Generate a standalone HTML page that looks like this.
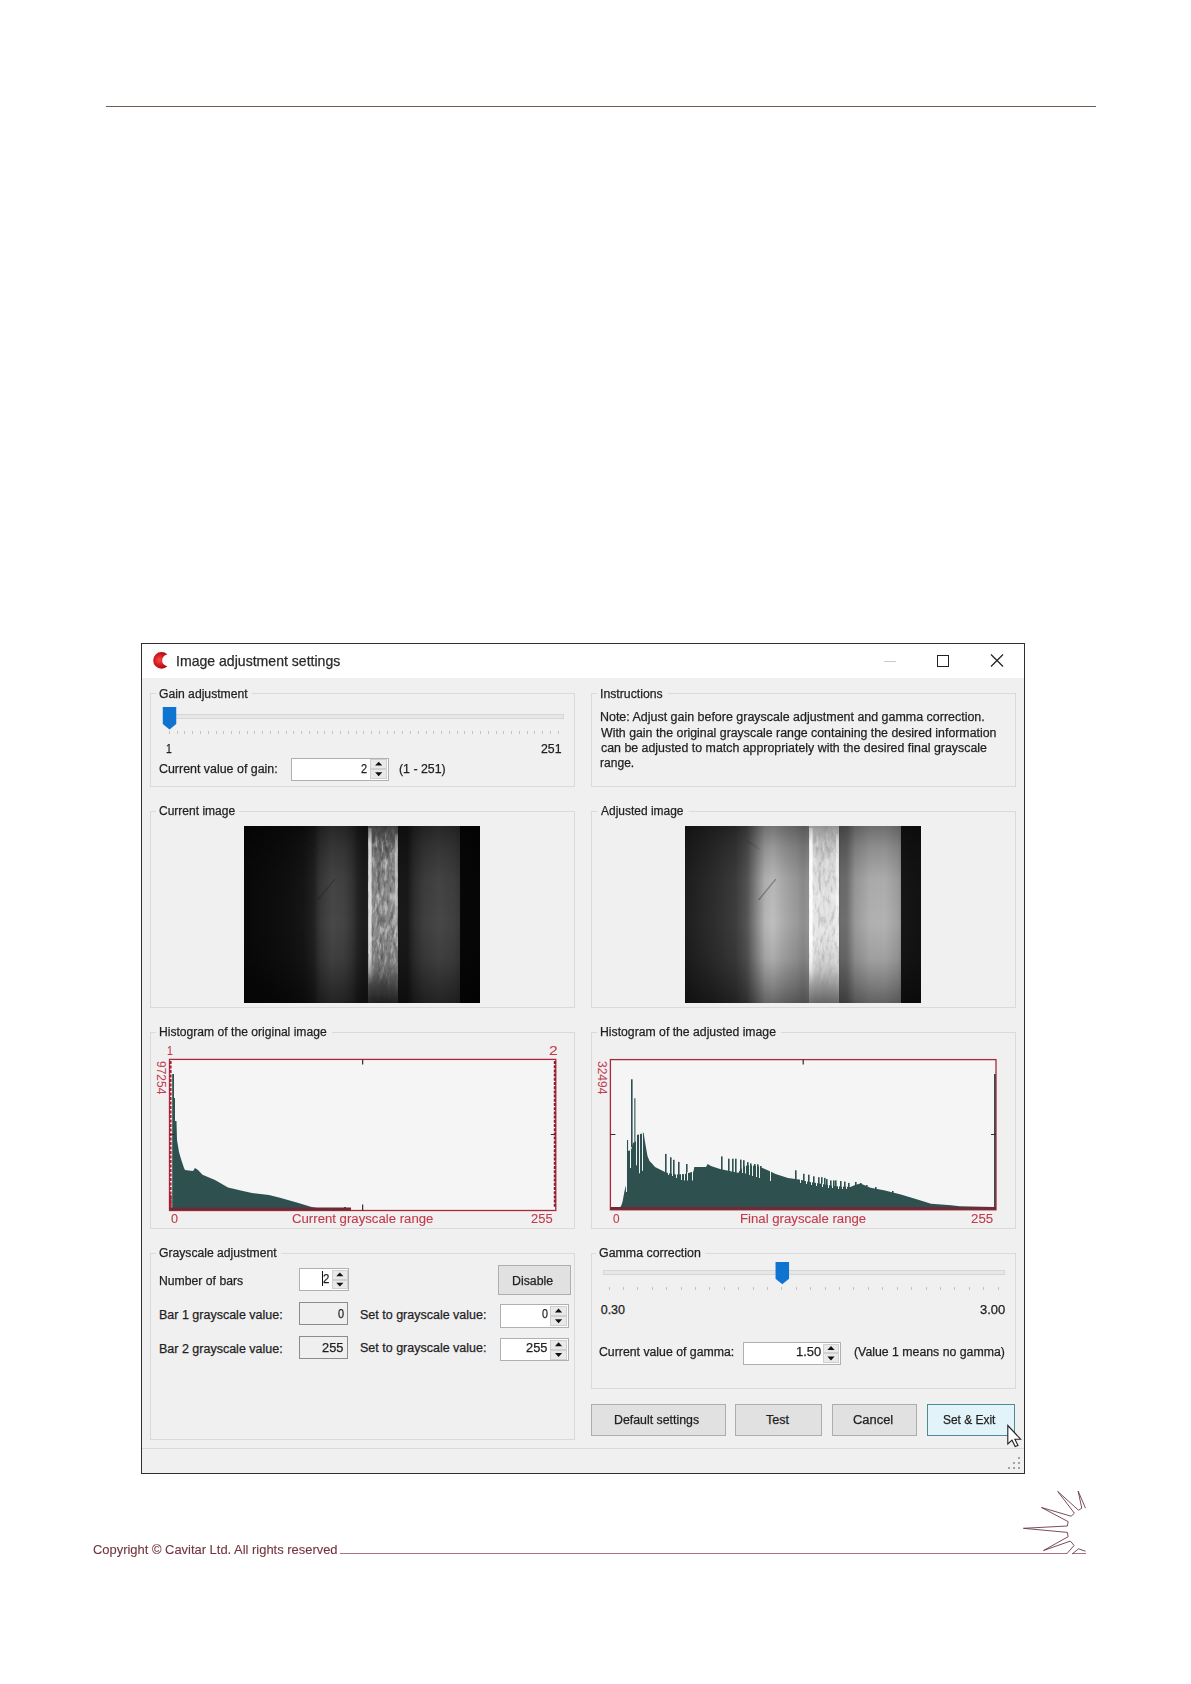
<!DOCTYPE html><html><head><meta charset="utf-8"><style>
html,body{margin:0;padding:0;background:#fff;width:1191px;height:1684px;overflow:hidden;position:relative}
.t{position:absolute;white-space:pre;font-family:"Liberation Sans", sans-serif;line-height:1;-webkit-text-stroke:0.25px currentColor}
svg{position:absolute;left:0;top:0;overflow:visible}
div{box-sizing:border-box}
</style></head><body>
<div style="position:absolute;left:106px;top:106px;width:990px;height:1.3px;background:#735c4f"></div>
<div style="position:absolute;left:141px;top:643px;width:884px;height:831px;background:#f0f0f0;border:1px solid #2f2f2f"></div>
<div style="position:absolute;left:142px;top:644px;width:882px;height:34px;background:#fff"></div>
<svg width="1" height="1"><defs><radialGradient id="ig" gradientUnits="userSpaceOnUse" cx="159.5" cy="660" r="9"><stop offset="0" stop-color="#f2503e"/><stop offset="0.55" stop-color="#d91c22"/><stop offset="1" stop-color="#a80c14"/></radialGradient></defs><path d="M167.4 654.56 A8.3 8.3 0 1 0 167.4 666.24 A5.87 5.87 0 0 1 167.4 654.56 Z" fill="url(#ig)"/></svg>
<div style="position:absolute;left:884px;top:660.5px;width:12px;height:1px;background:#c9c9c9"></div>
<div style="position:absolute;left:937px;top:654.5px;width:12px;height:12px;border:1.2px solid #222"></div>
<svg width="1" height="1"><path d="M991 654.5 L1003 666.5 M1003 654.5 L991 666.5" stroke="#222" stroke-width="1.2"/></svg>
<div style="position:absolute;left:149.6px;top:693px;width:425.9px;height:94px;border:1px solid #dadada;"></div>
<div style="position:absolute;left:155.6px;top:692px;width:96.4px;height:3px;background:#f0f0f0"></div>
<div style="position:absolute;left:590.6px;top:693px;width:425.4px;height:94px;border:1px solid #dadada;"></div>
<div style="position:absolute;left:597px;top:692px;width:71px;height:3px;background:#f0f0f0"></div>
<div style="position:absolute;left:149.6px;top:810.7px;width:425.9px;height:197.8px;border:1px solid #dadada;"></div>
<div style="position:absolute;left:155.6px;top:809.7px;width:83.9px;height:3px;background:#f0f0f0"></div>
<div style="position:absolute;left:590.6px;top:810.7px;width:425.4px;height:197.8px;border:1px solid #dadada;"></div>
<div style="position:absolute;left:597px;top:809.7px;width:91.5px;height:3px;background:#f0f0f0"></div>
<div style="position:absolute;left:149.6px;top:1031.6px;width:425.9px;height:197.9px;border:1px solid #dadada;"></div>
<div style="position:absolute;left:156px;top:1030.6px;width:176px;height:3px;background:#f0f0f0"></div>
<div style="position:absolute;left:590.6px;top:1031.6px;width:425.4px;height:197.9px;border:1px solid #dadada;"></div>
<div style="position:absolute;left:597px;top:1030.6px;width:184px;height:3px;background:#f0f0f0"></div>
<div style="position:absolute;left:149.6px;top:1252.5px;width:425.9px;height:187.5px;border:1px solid #dadada;"></div>
<div style="position:absolute;left:155.6px;top:1251.5px;width:125.9px;height:3px;background:#f0f0f0"></div>
<div style="position:absolute;left:590.6px;top:1252.5px;width:425.4px;height:136.5px;border:1px solid #dadada;"></div>
<div style="position:absolute;left:596px;top:1251.5px;width:109px;height:3px;background:#f0f0f0"></div>
<div style="position:absolute;left:142px;top:1448px;width:882px;height:1px;background:#dadada"></div>
<div style="position:absolute;left:163px;top:713.8px;width:400.5px;height:5.2px;background:#e7e7e7;border:1px solid #d6d6d6"></div>
<svg width="1" height="1"><path d="M162.75 707 L176.25 707 L176.25 724 L169.5 729.5 L162.75 724 Z" fill="#0f74cf"/></svg>
<div style="position:absolute;left:168.85px;top:730.7px;width:0.9px;height:3.5px;background:#c2c2c2"></div>
<div style="position:absolute;left:176.63px;top:730.7px;width:0.9px;height:3.5px;background:#c2c2c2"></div>
<div style="position:absolute;left:184.41px;top:730.7px;width:0.9px;height:3.5px;background:#c2c2c2"></div>
<div style="position:absolute;left:192.18px;top:730.7px;width:0.9px;height:3.5px;background:#c2c2c2"></div>
<div style="position:absolute;left:199.96px;top:730.7px;width:0.9px;height:3.5px;background:#c2c2c2"></div>
<div style="position:absolute;left:207.74px;top:730.7px;width:0.9px;height:3.5px;background:#c2c2c2"></div>
<div style="position:absolute;left:215.52px;top:730.7px;width:0.9px;height:3.5px;background:#c2c2c2"></div>
<div style="position:absolute;left:223.3px;top:730.7px;width:0.9px;height:3.5px;background:#c2c2c2"></div>
<div style="position:absolute;left:231.07px;top:730.7px;width:0.9px;height:3.5px;background:#c2c2c2"></div>
<div style="position:absolute;left:238.85px;top:730.7px;width:0.9px;height:3.5px;background:#c2c2c2"></div>
<div style="position:absolute;left:246.63px;top:730.7px;width:0.9px;height:3.5px;background:#c2c2c2"></div>
<div style="position:absolute;left:254.41px;top:730.7px;width:0.9px;height:3.5px;background:#c2c2c2"></div>
<div style="position:absolute;left:262.19px;top:730.7px;width:0.9px;height:3.5px;background:#c2c2c2"></div>
<div style="position:absolute;left:269.96px;top:730.7px;width:0.9px;height:3.5px;background:#c2c2c2"></div>
<div style="position:absolute;left:277.74px;top:730.7px;width:0.9px;height:3.5px;background:#c2c2c2"></div>
<div style="position:absolute;left:285.52px;top:730.7px;width:0.9px;height:3.5px;background:#c2c2c2"></div>
<div style="position:absolute;left:293.3px;top:730.7px;width:0.9px;height:3.5px;background:#c2c2c2"></div>
<div style="position:absolute;left:301.08px;top:730.7px;width:0.9px;height:3.5px;background:#c2c2c2"></div>
<div style="position:absolute;left:308.85px;top:730.7px;width:0.9px;height:3.5px;background:#c2c2c2"></div>
<div style="position:absolute;left:316.63px;top:730.7px;width:0.9px;height:3.5px;background:#c2c2c2"></div>
<div style="position:absolute;left:324.41px;top:730.7px;width:0.9px;height:3.5px;background:#c2c2c2"></div>
<div style="position:absolute;left:332.19px;top:730.7px;width:0.9px;height:3.5px;background:#c2c2c2"></div>
<div style="position:absolute;left:339.97px;top:730.7px;width:0.9px;height:3.5px;background:#c2c2c2"></div>
<div style="position:absolute;left:347.74px;top:730.7px;width:0.9px;height:3.5px;background:#c2c2c2"></div>
<div style="position:absolute;left:355.52px;top:730.7px;width:0.9px;height:3.5px;background:#c2c2c2"></div>
<div style="position:absolute;left:363.3px;top:730.7px;width:0.9px;height:3.5px;background:#c2c2c2"></div>
<div style="position:absolute;left:371.08px;top:730.7px;width:0.9px;height:3.5px;background:#c2c2c2"></div>
<div style="position:absolute;left:378.86px;top:730.7px;width:0.9px;height:3.5px;background:#c2c2c2"></div>
<div style="position:absolute;left:386.63px;top:730.7px;width:0.9px;height:3.5px;background:#c2c2c2"></div>
<div style="position:absolute;left:394.41px;top:730.7px;width:0.9px;height:3.5px;background:#c2c2c2"></div>
<div style="position:absolute;left:402.19px;top:730.7px;width:0.9px;height:3.5px;background:#c2c2c2"></div>
<div style="position:absolute;left:409.97px;top:730.7px;width:0.9px;height:3.5px;background:#c2c2c2"></div>
<div style="position:absolute;left:417.75px;top:730.7px;width:0.9px;height:3.5px;background:#c2c2c2"></div>
<div style="position:absolute;left:425.52px;top:730.7px;width:0.9px;height:3.5px;background:#c2c2c2"></div>
<div style="position:absolute;left:433.3px;top:730.7px;width:0.9px;height:3.5px;background:#c2c2c2"></div>
<div style="position:absolute;left:441.08px;top:730.7px;width:0.9px;height:3.5px;background:#c2c2c2"></div>
<div style="position:absolute;left:448.86px;top:730.7px;width:0.9px;height:3.5px;background:#c2c2c2"></div>
<div style="position:absolute;left:456.64px;top:730.7px;width:0.9px;height:3.5px;background:#c2c2c2"></div>
<div style="position:absolute;left:464.41px;top:730.7px;width:0.9px;height:3.5px;background:#c2c2c2"></div>
<div style="position:absolute;left:472.19px;top:730.7px;width:0.9px;height:3.5px;background:#c2c2c2"></div>
<div style="position:absolute;left:479.97px;top:730.7px;width:0.9px;height:3.5px;background:#c2c2c2"></div>
<div style="position:absolute;left:487.75px;top:730.7px;width:0.9px;height:3.5px;background:#c2c2c2"></div>
<div style="position:absolute;left:495.53px;top:730.7px;width:0.9px;height:3.5px;background:#c2c2c2"></div>
<div style="position:absolute;left:503.3px;top:730.7px;width:0.9px;height:3.5px;background:#c2c2c2"></div>
<div style="position:absolute;left:511.08px;top:730.7px;width:0.9px;height:3.5px;background:#c2c2c2"></div>
<div style="position:absolute;left:518.86px;top:730.7px;width:0.9px;height:3.5px;background:#c2c2c2"></div>
<div style="position:absolute;left:526.64px;top:730.7px;width:0.9px;height:3.5px;background:#c2c2c2"></div>
<div style="position:absolute;left:534.42px;top:730.7px;width:0.9px;height:3.5px;background:#c2c2c2"></div>
<div style="position:absolute;left:542.19px;top:730.7px;width:0.9px;height:3.5px;background:#c2c2c2"></div>
<div style="position:absolute;left:549.97px;top:730.7px;width:0.9px;height:3.5px;background:#c2c2c2"></div>
<div style="position:absolute;left:557.75px;top:730.7px;width:0.9px;height:3.5px;background:#c2c2c2"></div>
<div style="position:absolute;left:602.5px;top:1269.5px;width:402px;height:5px;background:#e7e7e7;border:1px solid #d6d6d6"></div>
<svg width="1" height="1"><path d="M775.55 1262 L789.05 1262 L789.05 1278.8 L782.3 1284.3 L775.55 1278.8 Z" fill="#0f74cf"/></svg>
<div style="position:absolute;left:608.55px;top:1286.5px;width:0.9px;height:3.5px;background:#c2c2c2"></div>
<div style="position:absolute;left:622.96px;top:1286.5px;width:0.9px;height:3.5px;background:#c2c2c2"></div>
<div style="position:absolute;left:637.36px;top:1286.5px;width:0.9px;height:3.5px;background:#c2c2c2"></div>
<div style="position:absolute;left:651.77px;top:1286.5px;width:0.9px;height:3.5px;background:#c2c2c2"></div>
<div style="position:absolute;left:666.18px;top:1286.5px;width:0.9px;height:3.5px;background:#c2c2c2"></div>
<div style="position:absolute;left:680.58px;top:1286.5px;width:0.9px;height:3.5px;background:#c2c2c2"></div>
<div style="position:absolute;left:694.99px;top:1286.5px;width:0.9px;height:3.5px;background:#c2c2c2"></div>
<div style="position:absolute;left:709.4px;top:1286.5px;width:0.9px;height:3.5px;background:#c2c2c2"></div>
<div style="position:absolute;left:723.81px;top:1286.5px;width:0.9px;height:3.5px;background:#c2c2c2"></div>
<div style="position:absolute;left:738.21px;top:1286.5px;width:0.9px;height:3.5px;background:#c2c2c2"></div>
<div style="position:absolute;left:752.62px;top:1286.5px;width:0.9px;height:3.5px;background:#c2c2c2"></div>
<div style="position:absolute;left:767.03px;top:1286.5px;width:0.9px;height:3.5px;background:#c2c2c2"></div>
<div style="position:absolute;left:781.43px;top:1286.5px;width:0.9px;height:3.5px;background:#c2c2c2"></div>
<div style="position:absolute;left:795.84px;top:1286.5px;width:0.9px;height:3.5px;background:#c2c2c2"></div>
<div style="position:absolute;left:810.25px;top:1286.5px;width:0.9px;height:3.5px;background:#c2c2c2"></div>
<div style="position:absolute;left:824.65px;top:1286.5px;width:0.9px;height:3.5px;background:#c2c2c2"></div>
<div style="position:absolute;left:839.06px;top:1286.5px;width:0.9px;height:3.5px;background:#c2c2c2"></div>
<div style="position:absolute;left:853.47px;top:1286.5px;width:0.9px;height:3.5px;background:#c2c2c2"></div>
<div style="position:absolute;left:867.88px;top:1286.5px;width:0.9px;height:3.5px;background:#c2c2c2"></div>
<div style="position:absolute;left:882.28px;top:1286.5px;width:0.9px;height:3.5px;background:#c2c2c2"></div>
<div style="position:absolute;left:896.69px;top:1286.5px;width:0.9px;height:3.5px;background:#c2c2c2"></div>
<div style="position:absolute;left:911.1px;top:1286.5px;width:0.9px;height:3.5px;background:#c2c2c2"></div>
<div style="position:absolute;left:925.5px;top:1286.5px;width:0.9px;height:3.5px;background:#c2c2c2"></div>
<div style="position:absolute;left:939.91px;top:1286.5px;width:0.9px;height:3.5px;background:#c2c2c2"></div>
<div style="position:absolute;left:954.32px;top:1286.5px;width:0.9px;height:3.5px;background:#c2c2c2"></div>
<div style="position:absolute;left:968.72px;top:1286.5px;width:0.9px;height:3.5px;background:#c2c2c2"></div>
<div style="position:absolute;left:983.13px;top:1286.5px;width:0.9px;height:3.5px;background:#c2c2c2"></div>
<div style="position:absolute;left:997.54px;top:1286.5px;width:0.9px;height:3.5px;background:#c2c2c2"></div>
<div style="position:absolute;left:291px;top:757.5px;width:97.5px;height:23.2px;background:#fff;border:1px solid #b0b0b0"></div>
<div style="position:absolute;left:370.4px;top:759px;width:16.6px;height:10.1px;background:#e9e9e9;border:1px solid #d0d0d0"></div>
<div style="position:absolute;left:370.4px;top:769.1px;width:16.6px;height:10.1px;background:#e9e9e9;border:1px solid #d0d0d0"></div>
<svg width="1" height="1"><path d="M375.1 765.6 L382.3 765.6 L378.7 761.7 Z" fill="#111"/><path d="M375.1 772.35 L382.3 772.35 L378.7 776.25 Z" fill="#111"/></svg>
<div style="position:absolute;left:299.3px;top:1268.4px;width:50.2px;height:22.4px;background:#fff;border:1px solid #b0b0b0"></div>
<div style="position:absolute;left:331.7px;top:1269.9px;width:16.3px;height:9.7px;background:#e9e9e9;border:1px solid #d0d0d0"></div>
<div style="position:absolute;left:331.7px;top:1279.6px;width:16.3px;height:9.7px;background:#e9e9e9;border:1px solid #d0d0d0"></div>
<svg width="1" height="1"><path d="M336.25 1276.3 L343.45 1276.3 L339.85 1272.4 Z" fill="#111"/><path d="M336.25 1282.65 L343.45 1282.65 L339.85 1286.55 Z" fill="#111"/></svg>
<div style="position:absolute;left:299.3px;top:1302.4px;width:48.4px;height:22.7px;background:#efefef;border:1px solid #8c8c8c"></div>
<div style="position:absolute;left:299.3px;top:1336.4px;width:48.4px;height:22.7px;background:#efefef;border:1px solid #8c8c8c"></div>
<div style="position:absolute;left:500px;top:1304.4px;width:68.6px;height:23.2px;background:#fff;border:1px solid #b0b0b0"></div>
<div style="position:absolute;left:550px;top:1305.9px;width:17.1px;height:10.1px;background:#e9e9e9;border:1px solid #d0d0d0"></div>
<div style="position:absolute;left:550px;top:1316px;width:17.1px;height:10.1px;background:#e9e9e9;border:1px solid #d0d0d0"></div>
<svg width="1" height="1"><path d="M554.95 1312.5 L562.15 1312.5 L558.55 1308.6 Z" fill="#111"/><path d="M554.95 1319.25 L562.15 1319.25 L558.55 1323.15 Z" fill="#111"/></svg>
<div style="position:absolute;left:500px;top:1338px;width:68.6px;height:23.4px;background:#fff;border:1px solid #b0b0b0"></div>
<div style="position:absolute;left:550px;top:1339.5px;width:17.1px;height:10.2px;background:#e9e9e9;border:1px solid #d0d0d0"></div>
<div style="position:absolute;left:550px;top:1349.7px;width:17.1px;height:10.2px;background:#e9e9e9;border:1px solid #d0d0d0"></div>
<svg width="1" height="1"><path d="M554.95 1346.15 L562.15 1346.15 L558.55 1342.25 Z" fill="#111"/><path d="M554.95 1353 L562.15 1353 L558.55 1356.9 Z" fill="#111"/></svg>
<div style="position:absolute;left:743.3px;top:1342px;width:97.5px;height:22.7px;background:#fff;border:1px solid #b0b0b0"></div>
<div style="position:absolute;left:822.7px;top:1343.5px;width:16.6px;height:9.85px;background:#e9e9e9;border:1px solid #d0d0d0"></div>
<div style="position:absolute;left:822.7px;top:1353.35px;width:16.6px;height:9.85px;background:#e9e9e9;border:1px solid #d0d0d0"></div>
<svg width="1" height="1"><path d="M827.4 1349.97 L834.6 1349.97 L831 1346.07 Z" fill="#111"/><path d="M827.4 1356.48 L834.6 1356.48 L831 1360.38 Z" fill="#111"/></svg>
<div style="position:absolute;left:322.3px;top:1270.5px;width:1.1px;height:15.5px;background:#111"></div>
<div style="position:absolute;left:498.1px;top:1265px;width:72.9px;height:30.3px;background:#e1e1e1;border:1px solid #adadad"></div>
<div style="position:absolute;left:591.4px;top:1404.2px;width:134.2px;height:31.8px;background:#e1e1e1;border:1px solid #adadad"></div>
<div style="position:absolute;left:735px;top:1404.2px;width:87.4px;height:31.8px;background:#e1e1e1;border:1px solid #adadad"></div>
<div style="position:absolute;left:832px;top:1404.2px;width:85px;height:31.8px;background:#e1e1e1;border:1px solid #adadad"></div>
<div style="position:absolute;left:926.8px;top:1403.9px;width:88.6px;height:32.3px;background:#e3f3fa;border:1.6px solid #4d8c94"></div>
<svg style="left:244px;top:825.5px" width="236" height="177" viewBox="0 0 236 177"><defs><linearGradient id="i1h" gradientUnits="userSpaceOnUse" x1="0" y1="0" x2="236" y2="0"><stop offset="0.0000" stop-color="#080808"/><stop offset="0.0847" stop-color="#0b0b0b"/><stop offset="0.1907" stop-color="#101010"/><stop offset="0.2542" stop-color="#161616"/><stop offset="0.2966" stop-color="#222"/><stop offset="0.3220" stop-color="#383838"/><stop offset="0.3729" stop-color="#484848"/><stop offset="0.4237" stop-color="#434343"/><stop offset="0.4576" stop-color="#363636"/><stop offset="0.4831" stop-color="#242424"/><stop offset="0.5085" stop-color="#1c1c1c"/><stop offset="0.5246" stop-color="#1e1e1e"/><stop offset="0.5263" stop-color="#a8a8a8"/><stop offset="0.5424" stop-color="#949494"/><stop offset="0.5932" stop-color="#8a8a8a"/><stop offset="0.6356" stop-color="#969696"/><stop offset="0.6508" stop-color="#9a9a9a"/><stop offset="0.6534" stop-color="#1a1a1a"/><stop offset="0.6907" stop-color="#181818"/><stop offset="0.7203" stop-color="#2e2e2e"/><stop offset="0.7627" stop-color="#3e3e3e"/><stop offset="0.8263" stop-color="#474747"/><stop offset="0.8898" stop-color="#404040"/><stop offset="0.9136" stop-color="#383838"/><stop offset="0.9161" stop-color="#070707"/><stop offset="1.0000" stop-color="#050505"/></linearGradient><linearGradient id="i1v" x1="0" y1="0" x2="0" y2="1"><stop offset="0" stop-color="#000" stop-opacity="0.45"/><stop offset="0.12" stop-color="#000" stop-opacity="0.25"/><stop offset="0.3" stop-color="#000" stop-opacity="0.06"/><stop offset="0.55" stop-color="#000" stop-opacity="0"/><stop offset="0.75" stop-color="#000" stop-opacity="0.12"/><stop offset="0.9" stop-color="#000" stop-opacity="0.35"/><stop offset="1" stop-color="#000" stop-opacity="0.5"/></linearGradient><linearGradient id="i1sv" x1="0" y1="0" x2="0" y2="1"><stop offset="0" stop-color="#000" stop-opacity="0.6"/><stop offset="0.08" stop-color="#000" stop-opacity="0.4"/><stop offset="0.2" stop-color="#000" stop-opacity="0.15"/><stop offset="0.4" stop-color="#000" stop-opacity="0.04"/><stop offset="0.65" stop-color="#000" stop-opacity="0.05"/><stop offset="0.8" stop-color="#000" stop-opacity="0.22"/><stop offset="0.88" stop-color="#000" stop-opacity="0.5"/><stop offset="1" stop-color="#000" stop-opacity="0.78"/></linearGradient><filter id="i1nz" x="0" y="0" width="100%" height="100%" color-interpolation-filters="sRGB"><feTurbulence type="fractalNoise" baseFrequency="0.32 0.09" numOctaves="3" seed="11"/><feColorMatrix type="matrix" values="0 0 0 0 1  0 0 0 0 1  0 0 0 0 1  2.0 0 0 0 -0.9"/></filter><filter id="i1nzd" x="0" y="0" width="100%" height="100%" color-interpolation-filters="sRGB"><feTurbulence type="fractalNoise" baseFrequency="0.3 0.1" numOctaves="3" seed="5"/><feColorMatrix type="matrix" values="0 0 0 0 0  0 0 0 0 0  0 0 0 0 0  2.0 0 0 0 -0.95"/></filter><linearGradient id="i1mg" x1="0" y1="0" x2="0" y2="1"><stop offset="0" stop-color="#fff" stop-opacity="0.1"/><stop offset="0.12" stop-color="#fff" stop-opacity="1"/><stop offset="0.72" stop-color="#fff" stop-opacity="1"/><stop offset="0.9" stop-color="#fff" stop-opacity="0.1"/><stop offset="1" stop-color="#fff" stop-opacity="0"/></linearGradient><mask id="i1mk" maskUnits="userSpaceOnUse" x="0" y="0" width="236" height="177"><rect x="124" y="0" width="30" height="177" fill="url(#i1mg)"/></mask></defs><rect width="236" height="177" fill="url(#i1h)"/><rect width="124" height="177" fill="url(#i1v)"/><rect x="154" width="82" height="177" fill="url(#i1v)"/><rect x="124" width="30" height="177" fill="url(#i1sv)"/><g mask="url(#i1mk)"><rect x="124" y="0" width="30" height="177" filter="url(#i1nz)" opacity="0.65"/><rect x="124" y="0" width="30" height="177" filter="url(#i1nzd)" opacity="0.45"/></g><linearGradient id="i1eg" x1="0" y1="0" x2="0" y2="1"><stop offset="0" stop-color="#e4e4e4" stop-opacity="0.3"/><stop offset="0.1" stop-color="#e4e4e4" stop-opacity="0.9"/><stop offset="0.6" stop-color="#e4e4e4" stop-opacity="0.9"/><stop offset="0.8" stop-color="#e4e4e4" stop-opacity="0.54"/><stop offset="0.92" stop-color="#e4e4e4" stop-opacity="0"/></linearGradient><rect x="124.4" y="2" width="3.2" height="170" fill="url(#i1eg)"/><rect x="150.8" y="8" width="2.6" height="100" fill="url(#i1eg)" opacity="0.6"/><path d="M90.5 53.5 L74 73.5" stroke="#000" stroke-width="1.3" opacity="0.18" stroke-linecap="round"/><path d="M63 15.5 L74 23" stroke="#000" stroke-width="1.6" opacity="0.063" stroke-linecap="round"/></svg>
<svg style="left:685px;top:825.5px" width="236" height="177" viewBox="0 0 236 177"><defs><linearGradient id="i2h" gradientUnits="userSpaceOnUse" x1="0" y1="0" x2="236" y2="0"><stop offset="0.0000" stop-color="#1a1a1a"/><stop offset="0.0064" stop-color="#1e1e1e"/><stop offset="0.1271" stop-color="#2e2e2e"/><stop offset="0.2119" stop-color="#3c3c3c"/><stop offset="0.2627" stop-color="#555"/><stop offset="0.3051" stop-color="#8a8a8a"/><stop offset="0.3390" stop-color="#b4b4b4"/><stop offset="0.3729" stop-color="#bebebe"/><stop offset="0.4068" stop-color="#b0b0b0"/><stop offset="0.4407" stop-color="#a4a4a4"/><stop offset="0.4746" stop-color="#9a9a9a"/><stop offset="0.5000" stop-color="#8e8e8e"/><stop offset="0.5246" stop-color="#959595"/><stop offset="0.5263" stop-color="#f4f4f4"/><stop offset="0.5508" stop-color="#e6e6e6"/><stop offset="0.5932" stop-color="#dedede"/><stop offset="0.6356" stop-color="#e4e4e4"/><stop offset="0.6508" stop-color="#eaeaea"/><stop offset="0.6534" stop-color="#6a6a6a"/><stop offset="0.6864" stop-color="#707070"/><stop offset="0.7203" stop-color="#999"/><stop offset="0.7839" stop-color="#b0b0b0"/><stop offset="0.8475" stop-color="#b2b2b2"/><stop offset="0.9025" stop-color="#a0a0a0"/><stop offset="0.9136" stop-color="#959595"/><stop offset="0.9161" stop-color="#161616"/><stop offset="1.0000" stop-color="#121212"/></linearGradient><linearGradient id="i2v" x1="0" y1="0" x2="0" y2="1"><stop offset="0" stop-color="#000" stop-opacity="0.38"/><stop offset="0.12" stop-color="#000" stop-opacity="0.2"/><stop offset="0.3" stop-color="#000" stop-opacity="0.04"/><stop offset="0.55" stop-color="#000" stop-opacity="0"/><stop offset="0.75" stop-color="#000" stop-opacity="0.1"/><stop offset="0.9" stop-color="#000" stop-opacity="0.3"/><stop offset="1" stop-color="#000" stop-opacity="0.45"/></linearGradient><linearGradient id="i2sv" x1="0" y1="0" x2="0" y2="1"><stop offset="0" stop-color="#000" stop-opacity="0.35"/><stop offset="0.08" stop-color="#000" stop-opacity="0.2"/><stop offset="0.2" stop-color="#000" stop-opacity="0.06"/><stop offset="0.4" stop-color="#000" stop-opacity="0.0"/><stop offset="0.65" stop-color="#000" stop-opacity="0.0"/><stop offset="0.8" stop-color="#000" stop-opacity="0.12"/><stop offset="0.88" stop-color="#000" stop-opacity="0.3"/><stop offset="1" stop-color="#000" stop-opacity="0.55"/></linearGradient><filter id="i2nz" x="0" y="0" width="100%" height="100%" color-interpolation-filters="sRGB"><feTurbulence type="fractalNoise" baseFrequency="0.32 0.09" numOctaves="3" seed="11"/><feColorMatrix type="matrix" values="0 0 0 0 1  0 0 0 0 1  0 0 0 0 1  2.0 0 0 0 -0.9"/></filter><filter id="i2nzd" x="0" y="0" width="100%" height="100%" color-interpolation-filters="sRGB"><feTurbulence type="fractalNoise" baseFrequency="0.3 0.1" numOctaves="3" seed="5"/><feColorMatrix type="matrix" values="0 0 0 0 0  0 0 0 0 0  0 0 0 0 0  2.0 0 0 0 -0.95"/></filter><linearGradient id="i2mg" x1="0" y1="0" x2="0" y2="1"><stop offset="0" stop-color="#fff" stop-opacity="0.1"/><stop offset="0.12" stop-color="#fff" stop-opacity="1"/><stop offset="0.72" stop-color="#fff" stop-opacity="1"/><stop offset="0.9" stop-color="#fff" stop-opacity="0.1"/><stop offset="1" stop-color="#fff" stop-opacity="0"/></linearGradient><mask id="i2mk" maskUnits="userSpaceOnUse" x="0" y="0" width="236" height="177"><rect x="124" y="0" width="30" height="177" fill="url(#i2mg)"/></mask></defs><rect width="236" height="177" fill="url(#i2h)"/><rect width="124" height="177" fill="url(#i2v)"/><rect x="154" width="82" height="177" fill="url(#i2v)"/><rect x="124" width="30" height="177" fill="url(#i2sv)"/><g mask="url(#i2mk)"><rect x="124" y="0" width="30" height="177" filter="url(#i2nz)" opacity="0.5"/><rect x="124" y="0" width="30" height="177" filter="url(#i2nzd)" opacity="0.22"/></g><linearGradient id="i2eg" x1="0" y1="0" x2="0" y2="1"><stop offset="0" stop-color="#ffffff" stop-opacity="0.3"/><stop offset="0.1" stop-color="#ffffff" stop-opacity="0.9"/><stop offset="0.6" stop-color="#ffffff" stop-opacity="0.9"/><stop offset="0.8" stop-color="#ffffff" stop-opacity="0.54"/><stop offset="0.92" stop-color="#ffffff" stop-opacity="0"/></linearGradient><rect x="124.4" y="2" width="3.2" height="170" fill="url(#i2eg)"/><rect x="150.8" y="8" width="2.6" height="100" fill="url(#i2eg)" opacity="0.6"/><path d="M90.5 53.5 L74 73.5" stroke="#000" stroke-width="1.3" opacity="0.28" stroke-linecap="round"/><path d="M63 15.5 L74 23" stroke="#000" stroke-width="1.6" opacity="0.098" stroke-linecap="round"/></svg>
<svg width="1" height="1"><rect x="169.5" y="1059.4" width="386.29999999999995" height="151.0999999999999" fill="#f5f5f5"/><path d="M170.5 1210.5 L172.2 1210.5 L172.2 1074 L174 1074 L174 1098 L175 1098 L175 1121 L176.5 1121 L177 1140 L179 1152 L181 1159 L182 1162 L184 1168 L185 1170 L193 1171 L195 1168 L198 1170 L202.5 1174.7 L215 1180 L228 1187.6 L243 1191 L252 1193 L269 1195 L280 1197.8 L298.5 1203 L311.5 1207 L317 1208 L344 1208 L344 1207 L346 1207 L346 1208 L351 1208 L351 1210.5 Z" fill="#2e5150"/><rect x="169.5" y="1059.4" width="386.29999999999995" height="151.0999999999999" fill="none" stroke="#a82a3c" stroke-width="1.3"/><rect x="169.5" y="1207.5" width="181.5" height="3" fill="#6e2a36"/><path d="M362.65 1059.4 V1064.4 M362.65 1210.5 V1204.5 M169.5 1134.5 H174.5 M555.8 1134.5 H550.8" stroke="#3a2a2e" stroke-width="1.2"/><path d="M170.6 1061 V1206" stroke="#a81e32" stroke-width="2" stroke-dasharray="3 1.5"/><path d="M170.3 1195 V1208" stroke="#a81e32" stroke-width="2.5"/><path d="M554.8 1061 V1208" stroke="#8a1a2c" stroke-width="2" stroke-dasharray="3 1.2"/></svg>
<svg width="1" height="1"><rect x="610.4" y="1059.6" width="385.6" height="150.20000000000005" fill="#f5f5f5"/><path d="M620.1 1209.8 L620.1 1207.5 L621.5 1205 L622.6 1201.5 L624.3 1192.3 L625.6 1186.4 L626.2 1186 L626.2 1140 L628.1 1140 L628.1 1151 L631 1150 L633 1143 L636 1141 L637 1135 L643.7 1133 L644.7 1140 L646.3 1149.3 L647.5 1156 L649.5 1161 L652 1163.6 L655 1167 L660 1169.5 L665 1172 L670 1173.5 L676 1174.5 L685 1174 L693.5 1171.5 L694.3 1167 L706 1167 L707.6 1164 L711 1166 L720 1169 L737.8 1172.8 L743 1167 L748 1165 L760 1166.5 L762 1167.8 L770.5 1171.6 L775.6 1174 L788 1177.9 L800.7 1179.7 L807 1181.6 L819.6 1183.5 L833.6 1186 L850.4 1186.9 L855 1185 L860.5 1183.5 L870.5 1187.7 L884 1190.2 L900.8 1194.4 L917.5 1199.5 L931 1203.7 L951.1 1205.3 L959.5 1206.2 L994 1207 L994 1074 L996 1074 L996 1209.8 Z" fill="#2e5150"/><rect x="631" y="1079.3" width="1.6" height="67.7" fill="#2e5150"/><rect x="634" y="1098.2" width="1.6" height="43.9" fill="#6d8886"/><rect x="642" y="1132.8" width="1.6" height="1.06" fill="#2e5150"/><rect x="665" y="1153.9" width="1.6" height="18.75" fill="#2e5150"/><rect x="670" y="1157.3" width="1.6" height="16.87" fill="#2e5150"/><rect x="673" y="1159.8" width="1.6" height="14.87" fill="#2e5150"/><rect x="678" y="1161.9" width="1.6" height="12.93" fill="#2e5150"/><rect x="686" y="1164" width="1.6" height="10.06" fill="#2e5150"/><rect x="721" y="1156.4" width="1.6" height="13.53" fill="#2e5150"/><rect x="728" y="1158.7" width="1.6" height="12.57" fill="#2e5150"/><rect x="732" y="1158.7" width="1.6" height="13.47" fill="#2e5150"/><rect x="735" y="1158.7" width="1.6" height="14.11" fill="#2e5150"/><rect x="740" y="1159.6" width="1.6" height="10.91" fill="#2e5150"/><rect x="743" y="1160.2" width="1.6" height="7.1" fill="#2e5150"/><rect x="747" y="1162.1" width="1.6" height="3.56" fill="#2e5150"/><rect x="750" y="1163.4" width="1.6" height="2.47" fill="#2e5150"/><rect x="754" y="1164" width="1.6" height="2.3" fill="#2e5150"/><rect x="757" y="1164.3" width="1.6" height="2.48" fill="#2e5150"/><rect x="760" y="1166" width="1.6" height="1.65" fill="#2e5150"/><rect x="795" y="1170.3" width="1.6" height="9.19" fill="#2e5150"/><rect x="803" y="1173.8" width="1.6" height="7.18" fill="#2e5150"/><rect x="808" y="1174.7" width="1.6" height="7.7" fill="#2e5150"/><rect x="813" y="1176.3" width="1.6" height="6.86" fill="#2e5150"/><rect x="818" y="1177.2" width="1.6" height="6.62" fill="#2e5150"/><rect x="821" y="1177.2" width="1.6" height="7.14" fill="#2e5150"/><rect x="824" y="1177.9" width="1.6" height="7.01" fill="#2e5150"/><rect x="826" y="1179.1" width="1.6" height="6.26" fill="#2e5150"/><rect x="830" y="1180.4" width="1.6" height="5.53" fill="#2e5150"/><rect x="833" y="1180.4" width="1.6" height="6.12" fill="#2e5150"/><rect x="835" y="1180.4" width="1.6" height="6.23" fill="#2e5150"/><rect x="840" y="1181" width="1.6" height="5.86" fill="#2e5150"/><rect x="844" y="1181.6" width="1.6" height="5.5" fill="#2e5150"/><rect x="848" y="1182.9" width="1.6" height="4.4" fill="#2e5150"/><rect x="855" y="1182" width="1.6" height="3.23" fill="#2e5150"/><rect x="860" y="1183" width="1.6" height="1.21" fill="#2e5150"/><rect x="866" y="1185" width="1.6" height="1.73" fill="#2e5150"/><rect x="875" y="1187" width="1.6" height="2.22" fill="#2e5150"/><rect x="892" y="1191" width="1.6" height="1.95" fill="#2e5150"/><rect x="636" y="1134.26" width="1" height="31.04" fill="#eef2f2"/><rect x="639" y="1133.28" width="1" height="40.02" fill="#eef2f2"/><rect x="642" y="1132.5" width="1" height="38.3" fill="#eef2f2"/><rect x="630" y="1146" width="1" height="22" fill="#eef2f2"/><rect x="626" y="1139.5" width="1" height="52.5" fill="#eef2f2"/><rect x="668" y="1171.95" width="1" height="3.05" fill="#eef2f2"/><rect x="672" y="1173.17" width="1" height="2.83" fill="#eef2f2"/><rect x="676" y="1173.83" width="1" height="4.17" fill="#eef2f2"/><rect x="681" y="1173.61" width="1" height="6.39" fill="#eef2f2"/><rect x="684" y="1173.21" width="1" height="7.29" fill="#eef2f2"/><rect x="687" y="1172.24" width="1" height="8.26" fill="#eef2f2"/><rect x="692" y="1171" width="1" height="9.5" fill="#eef2f2"/><rect x="725" y="1169.35" width="1" height="0.65" fill="#eef2f2"/><rect x="730" y="1170.42" width="1" height="0.58" fill="#eef2f2"/><rect x="734" y="1171.17" width="1" height="0.83" fill="#eef2f2"/><rect x="738" y="1169.85" width="1" height="2.65" fill="#eef2f2"/><rect x="742" y="1166.3" width="1" height="6.7" fill="#eef2f2"/><rect x="745" y="1164.9" width="1" height="8.6" fill="#eef2f2"/><rect x="749" y="1164.51" width="1" height="10.49" fill="#eef2f2"/><rect x="752" y="1164.89" width="1" height="11.11" fill="#eef2f2"/><rect x="756" y="1165.38" width="1" height="11.62" fill="#eef2f2"/><rect x="759" y="1165.79" width="1" height="12.21" fill="#eef2f2"/><rect x="770" y="1170.43" width="1" height="10.57" fill="#eef2f2"/><rect x="800" y="1178.89" width="1" height="4.11" fill="#eef2f2"/><rect x="806" y="1180.35" width="1" height="3.65" fill="#eef2f2"/><rect x="811" y="1181.55" width="1" height="3.45" fill="#eef2f2"/><rect x="816" y="1182.23" width="1" height="3.77" fill="#eef2f2"/><rect x="822" y="1183.34" width="1" height="3.66" fill="#eef2f2"/><rect x="828" y="1184.41" width="1" height="3.59" fill="#eef2f2"/><rect x="832" y="1184.95" width="1" height="3.05" fill="#eef2f2"/><rect x="838" y="1185.66" width="1" height="3.34" fill="#eef2f2"/><rect x="842" y="1185.9" width="1" height="3.1" fill="#eef2f2"/><rect x="846" y="1186.12" width="1" height="2.88" fill="#eef2f2"/><rect x="610.4" y="1059.6" width="385.6" height="150.20000000000005" fill="none" stroke="#a82a3c" stroke-width="1.3"/><rect x="610.4" y="1207.0" width="385.6" height="2.8" fill="#6e2a36"/><path d="M803.2 1059.6 V1064.6 M610.4 1134.5 H615.4 M996 1134.5 H991" stroke="#3a2a2e" stroke-width="1.2"/></svg>
<div class="t" style="left:166.5px;top:1060.5px;font-size:12px;color:#c04050;-webkit-text-stroke:0;transform:rotate(90deg);transform-origin:0 0;">97254</div>
<div class="t" style="left:608px;top:1061px;font-size:12px;color:#c04050;-webkit-text-stroke:0;transform:rotate(90deg);transform-origin:0 0;">32494</div>
<div style="position:absolute;left:339.7px;top:1553px;width:727px;height:1.3px;background:#a7767c"></div>
<div style="position:absolute;left:1072.4px;top:1553px;width:13.6px;height:1.3px;background:#a7767c"></div>
<svg width="1" height="1"><path d="M1066.7 1553.8 L1074.1 1545.5 L1070.4 1541.1 L1043.5 1550.5 L1068.1 1536.7 L1067.4 1532.4 L1023.4 1528.3 L1067.4 1526 L1068.1 1521.6 L1041.5 1507.5 L1071.1 1516.2 L1074.4 1513.2 L1057.7 1491.4 L1078.5 1510.2 L1081.8 1508.2 L1078.1 1491 L1085.5 1508.2" fill="none" stroke="#6b3a44" stroke-width="0.9"/><path d="M1072.4 1553.8 L1078.5 1548.8 L1085.5 1551.2" fill="none" stroke="#6b3a44" stroke-width="0.9"/></svg>
<div class="t" style="left:175.63px;top:654.07px;font-size:14.5px;color:#2a2a2a;transform:scaleX(0.9708);transform-origin:0 0;">Image adjustment settings</div>
<div class="t" style="left:158.63px;top:687.98px;font-size:12.5px;color:#1f1f1f;transform:scaleX(0.9744);transform-origin:0 0;">Gain adjustment</div>
<div class="t" style="left:165.67px;top:742.88px;font-size:12.5px;color:#1f1f1f;transform:scaleX(0.8333);transform-origin:0 0;">1</div>
<div class="t" style="left:541.41px;top:743.38px;font-size:12.5px;color:#1f1f1f;transform:scaleX(0.9850);transform-origin:0 0;">251</div>
<div class="t" style="left:158.61px;top:763.38px;font-size:12.5px;color:#1f1f1f;transform:scaleX(0.9932);transform-origin:0 0;">Current value of gain:</div>
<div class="t" style="left:360.62px;top:763.38px;font-size:12.5px;color:#1f1f1f;transform:scaleX(0.8833);transform-origin:0 0;">2</div>
<div class="t" style="left:398.51px;top:763.38px;font-size:12.5px;color:#1f1f1f;transform:scaleX(0.9891);transform-origin:0 0;">(1 - 251)</div>
<div class="t" style="left:600.22px;top:687.98px;font-size:12.5px;color:#1f1f1f;transform:scaleX(0.9810);transform-origin:0 0;">Instructions</div>
<div class="t" style="left:600.2px;top:711.17px;font-size:12.5px;color:#1f1f1f;transform:scaleX(0.9958);transform-origin:0 0;">Note: Adjust gain before grayscale adjustment and gamma correction.</div>
<div class="t" style="left:601.2px;top:726.58px;font-size:12.5px;color:#1f1f1f;transform:scaleX(0.9880);transform-origin:0 0;">With gain the original grayscale range containing the desired information</div>
<div class="t" style="left:601.2px;top:741.77px;font-size:12.5px;color:#1f1f1f;transform:scaleX(0.9900);transform-origin:0 0;">can be adjusted to match appropriately with the desired final grayscale</div>
<div class="t" style="left:600.24px;top:756.98px;font-size:12.5px;color:#1f1f1f;transform:scaleX(0.9647);transform-origin:0 0;">range.</div>
<div class="t" style="left:158.64px;top:805.08px;font-size:12.5px;color:#1f1f1f;transform:scaleX(0.9615);transform-origin:0 0;">Current image</div>
<div class="t" style="left:601.2px;top:805.08px;font-size:12.5px;color:#1f1f1f;transform:scaleX(0.9570);transform-origin:0 0;">Adjusted image</div>
<div class="t" style="left:159.43px;top:1025.78px;font-size:12.5px;color:#1f1f1f;transform:scaleX(0.9692);transform-origin:0 0;">Histogram of the original image</div>
<div class="t" style="left:600.22px;top:1025.78px;font-size:12.5px;color:#1f1f1f;transform:scaleX(0.9777);transform-origin:0 0;">Histogram of the adjusted image</div>
<div class="t" style="left:167.02px;top:1044.9px;font-size:12.0px;color:#c23a4c;transform:scaleX(0.8800);transform-origin:0 0;-webkit-text-stroke:0.1px currentColor;">1</div>
<div class="t" style="left:548.7px;top:1044.8px;font-size:12.0px;color:#c23a4c;transform:scaleX(1.3000);transform-origin:0 0;-webkit-text-stroke:0.1px currentColor;">2</div>
<div class="t" style="left:171.4px;top:1213.2px;font-size:12.0px;color:#c23a4c;transform:scaleX(1.0500);transform-origin:0 0;-webkit-text-stroke:0.1px currentColor;">0</div>
<div class="t" style="left:292.4px;top:1212.7px;font-size:12.0px;color:#c23a4c;transform:scaleX(1.0984);transform-origin:0 0;-webkit-text-stroke:0.1px currentColor;">Current grayscale range</div>
<div class="t" style="left:530.92px;top:1213.2px;font-size:12.0px;color:#c23a4c;transform:scaleX(1.0789);transform-origin:0 0;-webkit-text-stroke:0.1px currentColor;">255</div>
<div class="t" style="left:612.5px;top:1213.2px;font-size:12.0px;color:#c23a4c;transform:scaleX(0.9833);transform-origin:0 0;-webkit-text-stroke:0.1px currentColor;">0</div>
<div class="t" style="left:740.4px;top:1212.7px;font-size:12.0px;color:#c23a4c;transform:scaleX(1.1000);transform-origin:0 0;-webkit-text-stroke:0.1px currentColor;">Final grayscale range</div>
<div class="t" style="left:970.89px;top:1213.2px;font-size:12.0px;color:#c23a4c;transform:scaleX(1.1053);transform-origin:0 0;-webkit-text-stroke:0.1px currentColor;">255</div>
<div class="t" style="left:158.83px;top:1247.38px;font-size:12.5px;color:#1f1f1f;transform:scaleX(0.9725);transform-origin:0 0;">Grayscale adjustment</div>
<div class="t" style="left:159.02px;top:1275.17px;font-size:12.5px;color:#1f1f1f;transform:scaleX(0.9765);transform-origin:0 0;">Number of bars</div>
<div class="t" style="left:322.58px;top:1272.78px;font-size:12.5px;color:#1f1f1f;transform:scaleX(0.9167);transform-origin:0 0;">2</div>
<div class="t" style="left:159px;top:1309.38px;font-size:12.5px;color:#1f1f1f;">Bar 1 grayscale value:</div>
<div class="t" style="left:337.8px;top:1307.78px;font-size:12.5px;color:#1f1f1f;transform:scaleX(0.8714);transform-origin:0 0;">0</div>
<div class="t" style="left:159px;top:1342.58px;font-size:12.5px;color:#1f1f1f;">Bar 2 grayscale value:</div>
<div class="t" style="left:322.38px;top:1341.67px;font-size:12.5px;color:#1f1f1f;transform:scaleX(1.0250);transform-origin:0 0;">255</div>
<div class="t" style="left:512.01px;top:1274.97px;font-size:12.5px;color:#1f1f1f;transform:scaleX(0.9875);transform-origin:0 0;">Disable</div>
<div class="t" style="left:360px;top:1308.88px;font-size:12.5px;color:#1f1f1f;">Set to grayscale value:</div>
<div class="t" style="left:542px;top:1308.38px;font-size:12.5px;color:#1f1f1f;transform:scaleX(0.8571);transform-origin:0 0;">0</div>
<div class="t" style="left:360px;top:1342.38px;font-size:12.5px;color:#1f1f1f;">Set to grayscale value:</div>
<div class="t" style="left:526.48px;top:1342.38px;font-size:12.5px;color:#1f1f1f;transform:scaleX(1.0250);transform-origin:0 0;">255</div>
<div class="t" style="left:599.01px;top:1246.88px;font-size:12.5px;color:#1f1f1f;transform:scaleX(0.9901);transform-origin:0 0;">Gamma correction</div>
<div class="t" style="left:600.7px;top:1304.17px;font-size:12.5px;color:#1f1f1f;">0.30</div>
<div class="t" style="left:979.56px;top:1304.38px;font-size:12.5px;color:#1f1f1f;transform:scaleX(1.0391);transform-origin:0 0;">3.00</div>
<div class="t" style="left:599.02px;top:1345.78px;font-size:12.5px;color:#1f1f1f;transform:scaleX(0.9831);transform-origin:0 0;">Current value of gamma:</div>
<div class="t" style="left:795.66px;top:1345.88px;font-size:12.5px;color:#1f1f1f;transform:scaleX(1.0391);transform-origin:0 0;">1.50</div>
<div class="t" style="left:854.42px;top:1346.38px;font-size:12.5px;color:#1f1f1f;transform:scaleX(0.9842);transform-origin:0 0;">(Value 1 means no gamma)</div>
<div class="t" style="left:614.01px;top:1414.38px;font-size:12.5px;color:#1f1f1f;transform:scaleX(0.9882);transform-origin:0 0;">Default settings</div>
<div class="t" style="left:766px;top:1414.38px;font-size:12.5px;color:#1f1f1f;">Test</div>
<div class="t" style="left:852.77px;top:1414.38px;font-size:12.5px;color:#1f1f1f;transform:scaleX(1.0324);transform-origin:0 0;">Cancel</div>
<div class="t" style="left:943.05px;top:1414.38px;font-size:12.5px;color:#1f1f1f;transform:scaleX(0.9537);transform-origin:0 0;">Set &amp; Exit</div>
<div class="t" style="left:93.01px;top:1543.05px;font-size:13.0px;color:#74343f;transform:scaleX(0.9947);transform-origin:0 0;-webkit-text-stroke:0.1px currentColor;">Copyright © Cavitar Ltd. All rights reserved</div>
<svg width="1" height="1"><path d="M1007.8 1425.5 L1007.8 1444 L1012 1440.2 L1015.2 1446.6 L1018 1445.4 L1014.9 1439.2 L1020.6 1439.2 Z" fill="#fff" stroke="#222" stroke-width="1.1"/></svg>
<div style="position:absolute;left:1018px;top:1457px;width:2px;height:2px;background:#a4a4a4"></div>
<div style="position:absolute;left:1018px;top:1462px;width:2px;height:2px;background:#a4a4a4"></div>
<div style="position:absolute;left:1013px;top:1462px;width:2px;height:2px;background:#a4a4a4"></div>
<div style="position:absolute;left:1018px;top:1467px;width:2px;height:2px;background:#a4a4a4"></div>
<div style="position:absolute;left:1013px;top:1467px;width:2px;height:2px;background:#a4a4a4"></div>
<div style="position:absolute;left:1008px;top:1467px;width:2px;height:2px;background:#a4a4a4"></div>
</body></html>
